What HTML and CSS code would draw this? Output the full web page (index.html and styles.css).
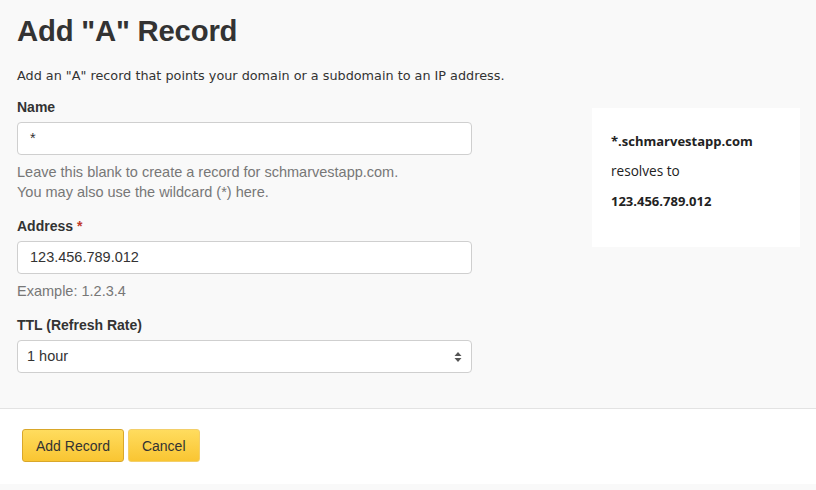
FILE: index.html
```html
<!DOCTYPE html>
<html>
<head>
<meta charset="utf-8">
<link rel="stylesheet" href="styles.css">
</head>
<body>
<div class="page">
  <div class="main">
    <div class="form">
      <h1 class="title">Add "A" Record</h1>
      <p class="intro">Add an "A" record that points your domain or a subdomain to an IP address.</p>
      <div class="field">
        <label class="label">Name</label>
        <div class="input">*</div>
        <p class="help">Leave this blank to create a record for schmarvestapp.com.<br>You may also use the wildcard (*) here.</p>
      </div>
      <div class="field">
        <label class="label">Address <span class="req">*</span></label>
        <div class="input">123.456.789.012</div>
        <p class="help">Example: 1.2.3.4</p>
      </div>
      <div class="field">
        <label class="label">TTL (Refresh Rate)</label>
        <div class="input select"><span>1 hour</span>
          <svg class="arrows" width="8" height="12" viewBox="0 0 8 12"><path d="M4 1 L7.5 5 H0.5 Z M4 11 L7.5 7 H0.5 Z" fill="#555"/></svg>
        </div>
      </div>
    </div>
    <aside class="preview">
      <div class="pv-strong">*.schmarvestapp.com</div>
      <div class="pv">resolves to</div>
      <div class="pv-strong">123.456.789.012</div>
    </aside>
  </div>
  <div class="footer">
    <button class="btn btn-primary">Add Record</button>
    <button class="btn">Cancel</button>
  </div>
</div>
</body>
</html>
```
FILE: styles.css
```css
html, body {
  margin: 0;
  padding: 0;
  background: #f9f9f9;
}
body {
  font-family: "Liberation Sans", Arial, sans-serif;
  color: #333;
}
.page {
  width: 816px;
  height: 490px;
  display: flex;
  flex-direction: column;
}
.main {
  display: flex;
  height: 409px;
  border-bottom: 1px solid #e3e3e3;
  box-sizing: border-box;
}
.form {
  width: 455px;
  flex-shrink: 0;
  padding-left: 17px;
  padding-top: 11px;
}
.title {
  margin: 0;
  font-size: 29.3px;
  font-weight: bold;
  line-height: 40px;
  color: #333;
  letter-spacing: -0.2px;
}
.intro {
  margin: 16px 0 0;
  font-family: "DejaVu Sans", Verdana, sans-serif;
  font-size: 12.8px;
  line-height: 18px;
  color: #333;
  white-space: nowrap;
}
.field {
  margin-top: 13px;
}
.field + .field {
  margin-top: 15px;
}
.label {
  display: block;
  font-weight: bold;
  font-size: 14px;
  line-height: 18px;
  color: #333;
}
.req {
  color: #c0392b;
}
.input {
  margin-top: 6px;
  height: 33px;
  box-sizing: border-box;
  border: 1px solid #cfcfcf;
  border-radius: 4px;
  background: #fff;
  padding: 0 12px;
  font-size: 14.5px;
  line-height: 31px;
  color: #333;
}
.select {
  display: flex;
  justify-content: space-between;
  align-items: center;
  padding: 0 9px 0 9px;
}
.arrows {
  display: block;
}
.help {
  margin: 7px 0 0;
  font-size: 14.5px;
  line-height: 20px;
  color: #777;
}
.preview {
  margin-left: 120px;
  margin-top: 108px;
  width: 208px;
  height: 139px;
  background: #fff;
  box-sizing: border-box;
  padding: 18px 0 0 19px;
  font-family: "Open Sans", sans-serif;
  font-size: 13px;
  color: #222;
}
.pv-strong {
  font-weight: bold;
  line-height: 30px;
}
.pv {
  font-size: 13.6px;
  line-height: 30px;
}
.footer {
  background: #fff;
  height: 75px;
  padding: 20px 0 0 22px;
  box-sizing: border-box;
  display: flex;
  gap: 4px;
  align-items: flex-start;
}
.btn {
  height: 33px;
  padding: 0 13px;
  font-family: "Liberation Sans", Arial, sans-serif;
  font-size: 14px;
  color: #333;
  background: linear-gradient(#ffdc5e, #f9c532);
  border: 1px solid #f3cf6a;
  border-radius: 3px;
}
.btn-primary {
  border-color: #d9a72a;
}
```
